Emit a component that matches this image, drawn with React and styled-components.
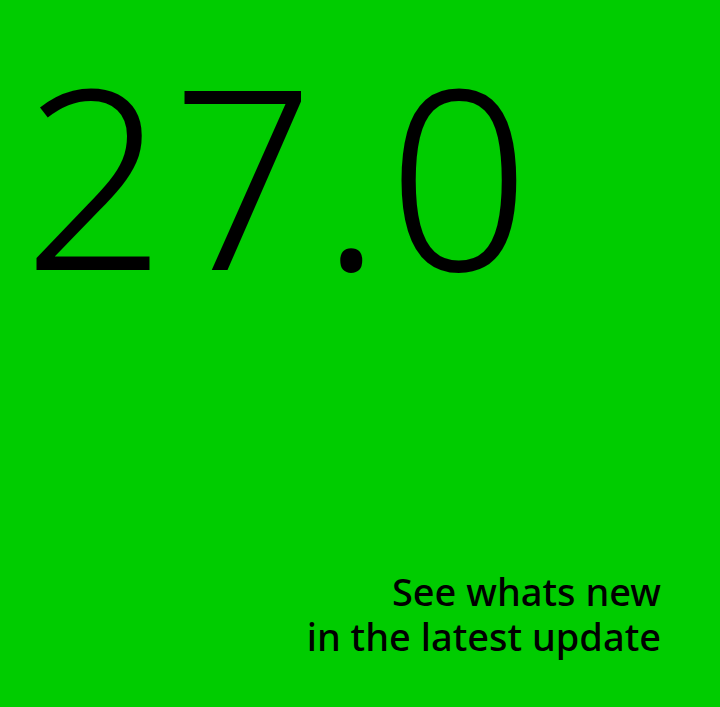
import React from "react";
import styled, { createGlobalStyle } from "styled-components";

const GlobalStyle = createGlobalStyle`
  html, body {
    margin: 0;
    padding: 0;
    background: #00cc00;
  }
`;

export default function App() {
  return (
    <>
      <GlobalStyle />
      <Page>
        <Version>27.0</Version>
        <Tagline>
          See whats new
          <br />
          in the latest update
        </Tagline>
      </Page>
    </>
  );
}

const Page = styled.div`
  box-sizing: border-box;
  width: 720px;
  height: 707px;
  background: #00cc00;
  color: #000;
  display: flex;
  flex-direction: column;
  justify-content: space-between;
  padding: 42px 59px 48px 23px;
  font-family: "Noto Sans", sans-serif;
`;

const Version = styled.div`
  font-size: 250px;
  font-weight: 300;
  line-height: 1.05;
  letter-spacing: 6px;
`;

const Tagline = styled.div`
  align-self: flex-end;
  text-align: right;
  font-size: 38px;
  font-weight: 500;
  line-height: 45px;
`;
